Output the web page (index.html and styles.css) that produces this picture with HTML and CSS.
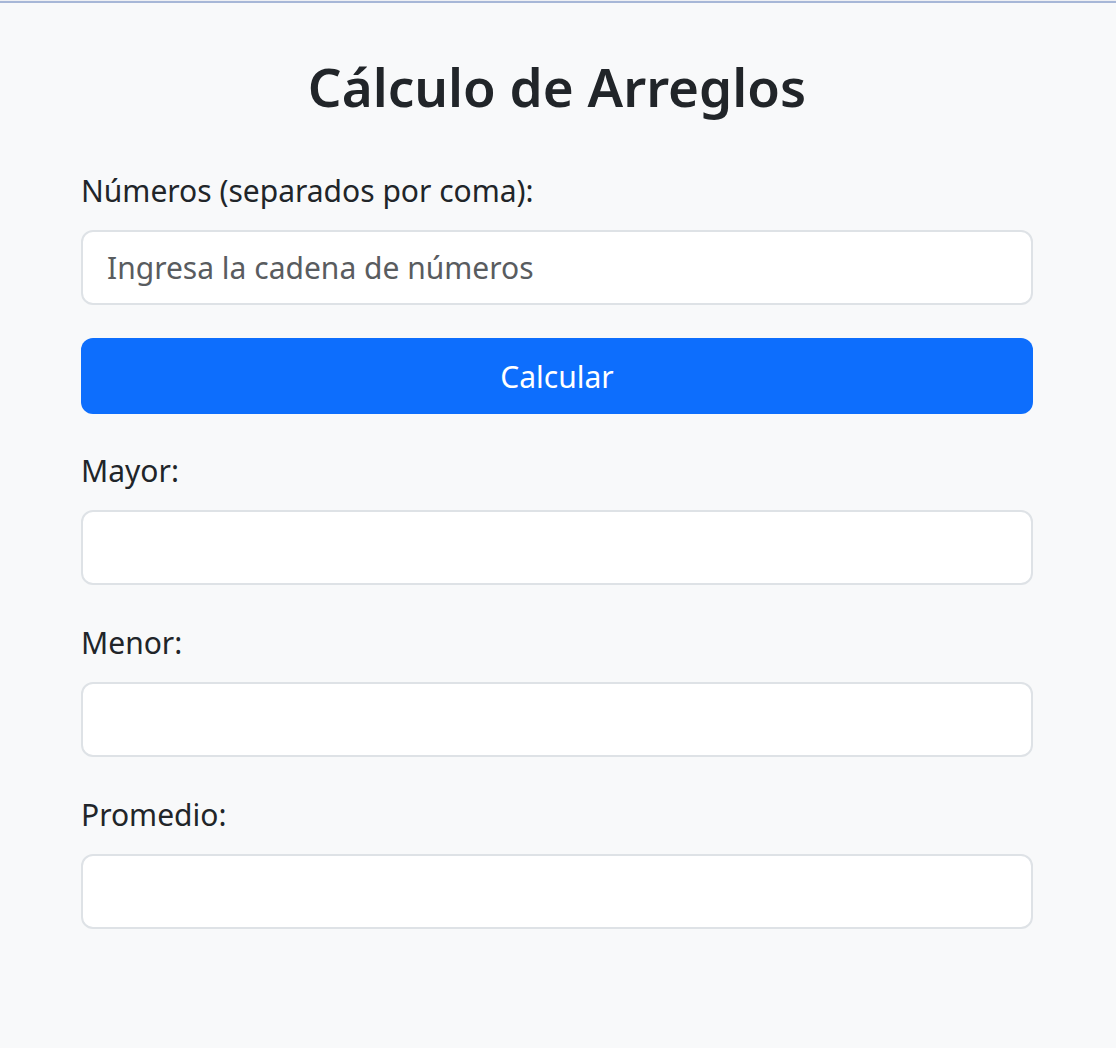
FILE: index.html
```html
<!DOCTYPE html>
<html lang="es">
<head>
<meta charset="utf-8">
<title>Cálculo de Arreglos</title>
<link rel="stylesheet" href="styles.css">
</head>
<body>
<div class="topbar"></div>
<main class="page">
  <h1 class="title">Cálculo de Arreglos</h1>
  <div class="group">
    <label class="label" for="nums">Números (separados por coma):</label>
    <input class="field" id="nums" type="text" placeholder="Ingresa la cadena de números">
  </div>
  <button class="btn" type="button">Calcular</button>
  <div class="group">
    <label class="label" for="mayor">Mayor:</label>
    <input class="field" id="mayor" type="text">
  </div>
  <div class="group">
    <label class="label" for="menor">Menor:</label>
    <input class="field" id="menor" type="text">
  </div>
  <div class="group">
    <label class="label" for="prom">Promedio:</label>
    <input class="field" id="prom" type="text">
  </div>
</main>
</body>
</html>
```
FILE: styles.css
```css
* { box-sizing: border-box; }
html, body {
  margin: 0;
  padding: 0;
  background: #f8f9fa;
}
body {
  font-family: "Noto Sans", "Open Sans", sans-serif;
  color: #212529;
}
.topbar {
  height: 3px;
  border-top: 1px solid #eef0f4;
  background: #a7b7d7;
}
.page {
  width: 952px;
  margin-left: 81px;
  padding-top: 50px;
}
.title {
  margin: 0 0 48px;
  font-size: 53px;
  line-height: 67px;
  font-weight: 600;
  text-align: center;
}
.group {
  display: flex;
  flex-direction: column;
  margin-bottom: 35px;
}
.label {
  display: block;
  font-size: 30px;
  line-height: 45px;
  margin-bottom: 17px;
}
.field {
  display: block;
  width: 100%;
  height: 75px;
  border: 2px solid #dee2e6;
  border-radius: 12px;
  background: #fff;
  padding: 0 24px;
  font-family: inherit;
  font-size: 30px;
  color: #212529;
  outline: none;
}
.field::placeholder {
  color: #595c5f;
  opacity: 1;
}
.btn {
  display: block;
  width: 100%;
  height: 76px;
  margin: -2px 0 34px;
  border: 0;
  border-radius: 12px;
  background: #0d6efd;
  color: #fff;
  font-family: inherit;
  font-size: 30px;
  cursor: pointer;
}
```
